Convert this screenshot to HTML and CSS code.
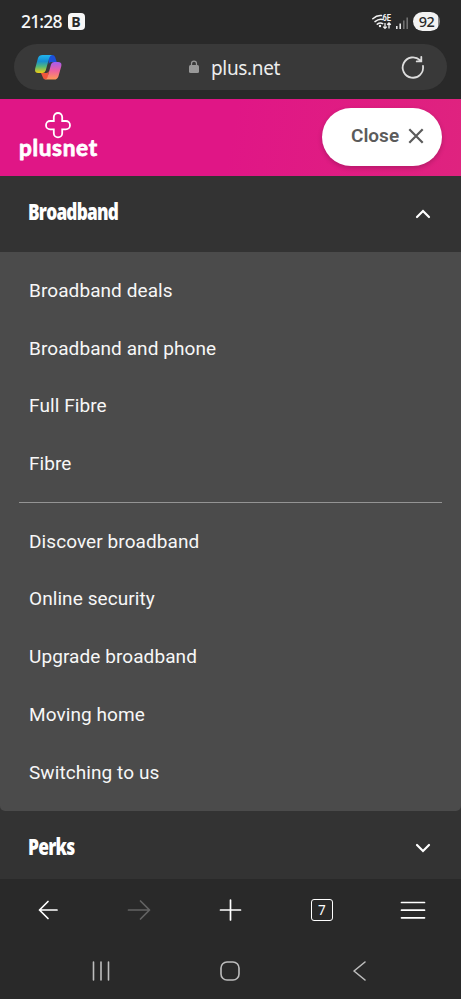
FILE: index.html
```
<!DOCTYPE html>
<html lang="en">
<head>
<meta charset="utf-8">
<title>Plusnet</title>
<link rel="stylesheet" href="styles.css">
</head>
<body>
<div class="status">
  <span class="time">21:28</span><span class="badge">B</span>
  <svg class="signals" width="40" height="20" viewBox="0 0 40 20" fill="none" stroke="#f2f2f2">
    <path d="M.8 6.800Q5 3 9.500 3.600M3 9.600Q6.500 6.600 10.500 7.400M5.300 12.200Q8 10 10.700 11.600" stroke-width="1.500" stroke-linecap="round"/>
    <circle cx="8" cy="14" r="1.200" fill="#f2f2f2" stroke="none"/>
    <text x="10.500" y="9.200" class="wifi-gen" textLength="8.500" lengthAdjust="spacingAndGlyphs">6E</text>
    <path d="M13 11v5.500M11.200 14.600L13 16.400L14.800 14.600M17 16.500v-5.500M15.200 12.800L17 11L18.800 12.800" stroke-width="1.300"/>
    <path d="M24.800 14V17M28.200 11.500V17" stroke-width="1.500"/>
    <path d="M31.800 8.500V17M35.200 5.500V17" stroke="#757575" stroke-width="1.500"/>
  </svg>
  <span class="battery">92</span>
</div>
<div class="address">
  <svg class="copilot" width="28" height="28" viewBox="0 0 28 28">
    <defs>
      <linearGradient id="ga" x1="0" y1="0" x2="0" y2="1"><stop offset="0" stop-color="#22b5ee"/><stop offset=".35" stop-color="#168ed0"/><stop offset=".65" stop-color="#55b978"/><stop offset="1" stop-color="#f1ce13"/></linearGradient>
      <linearGradient id="gb" x1="0" y1="0" x2="0" y2="1"><stop offset="0" stop-color="#a45cf0"/><stop offset=".5" stop-color="#ed609e"/><stop offset="1" stop-color="#ff9956"/></linearGradient>
    </defs>
    <path d="M14 2h4.300q2.200 0 2.900 2.200l1.500 4.900h-5.200q-2.100 0-2.700 2z" fill="#1c50d8"/>
    <path d="M7 20h5.200q2 0 2.700-2l-1 6.500q-.6 2-2.600 2-1.800 0-2.400-2z" fill="#ee563c"/>
    <path d="M8.500 2H18q-2 .4-2.800 3l-3.500 12.500q-1 2.500-3.300 2.500H4.400Q.2 20 1.200 15.500L4 5Q5 2 8.500 2z" fill="url(#ga)"/>
    <path d="M20 9h4q4.300 0 3.200 4.400l-2.800 10q-1 3.100-4.300 3.100h-9.700q2.500 0 3.200-2.500l3.400-12.500Q17.500 9 20 9z" fill="url(#gb)"/>
  </svg>
  <svg class="lock" width="12" height="14" viewBox="0 0 12 14"><rect x="1" y="5" width="10" height="8" rx="1.500" fill="#999"/><path d="M3.500 5V3.700a2.500 2.500 0 0 1 5 0V5" fill="none" stroke="#999" stroke-width="1.200"/></svg>
  <span class="host">plus.net</span>
  <svg class="reload" width="26" height="26" viewBox="0 0 26 26" fill="none" stroke="#ddd" stroke-width="1.800" stroke-linecap="round"><path d="M23 12A10.200 10.200 0 1 1 20 6.200M21.300 2.800V7.400H16.700"/></svg>
</div>
<header class="site">
  <svg class="logo" width="90" height="60" viewBox="0 0 90 60">
    <path d="M39 5a4.200 4.200 0 0 1 4.200 4.200v3.800h3.600a4.200 4.200 0 0 1 0 8.400h-3.600v3.800a4.200 4.200 0 0 1-8.400 0v-3.800h-3.600a4.200 4.200 0 0 1 0-8.400h3.600V9.200a4.200 4.200 0 0 1 4.200-4.200z" fill="none" stroke="#fff" stroke-width="1.800"/>
    <text x="0" y="47.500" class="wordmark" textLength="78">plusnet</text>
  </svg>
  <button class="close">Close <svg width="16" height="16" viewBox="0 0 16 16"><path d="M1.300 1.300l13.400 13.400M14.700 1.300l-13.400 13.400" fill="none" stroke="#5b5b5b" stroke-width="2.200"/></svg></button>
</header>
<nav>
  <div class="section first"><h2 class="title broadband">Broadband</h2><svg class="chev" width="16" height="10" viewBox="0 0 16 10"><path d="M2 8L8 2L14 8" fill="none" stroke="#fff" stroke-width="2.200" stroke-linecap="round"/></svg></div>
  <div class="submenu">
    <ul><li>Broadband deals</li><li>Broadband and phone</li><li>Full Fibre</li><li>Fibre</li></ul>
    <hr>
    <ul><li>Discover broadband</li><li>Online security</li><li>Upgrade broadband</li><li>Moving home</li><li>Switching to us</li></ul>
  </div>
  <div class="section second"><h2 class="title perks">Perks</h2><svg class="chev" width="16" height="10" viewBox="0 0 16 10"><path d="M2 2L8 8L14 2" fill="none" stroke="#fff" stroke-width="2.200" stroke-linecap="round"/></svg></div>
</nav>
<footer>
  <div class="toolbar">
    <svg width="26" height="26" viewBox="0 0 26 26"><path d="M13 4.500L4.500 13L13 21.500M4.500 13H22" /></svg>
    <svg class="dim" width="26" height="26" viewBox="0 0 26 26"><path d="M14.500 4L23.500 13L14.500 22M23.500 13H2.500" /></svg>
    <svg width="26" height="26" viewBox="0 0 26 26"><path d="M12.500 3V23M2.500 13H22.500" /></svg>
    <span class="tabs">7</span>
    <svg width="26" height="26" viewBox="0 0 26 26"><path d="M1.500 5.500h23M1.500 13.200h23M1.500 20.800h23" /></svg>
  </div>
  <div class="system">
    <svg width="24" height="24" viewBox="0 0 24 24"><path d="M4.500 3v18M12 3v18M19.500 3v18"/></svg>
    <svg width="24" height="24" viewBox="0 0 24 24"><rect x="3" y="3" width="18" height="18" rx="6"/></svg>
    <svg width="24" height="24" viewBox="0 0 24 24"><path d="M18 3L7 12L18 21"/></svg>
  </div>
</footer>
</body>
</html>
```
FILE: styles.css
```
* { box-sizing: border-box; }
body { margin: 0; width: 461px; height: 999px; background: #292929; color: #fff; font-family: Roboto, sans-serif; overflow: hidden; }
svg { display: block; flex: none; }
.status { height: 44px; display: flex; align-items: center; padding: 0 21px; }
.time { font: 500 17.500px/20px "Noto Sans", sans-serif; color: #f7f7f7; letter-spacing: -.85px; margin-top: -2px; }
.badge { margin: -1px 0 0 6px; width: 17px; height: 17px; border-radius: 4px; background: #f7f7f7; color: #292929; font: 700 14px/17px "Open Sans", sans-serif; text-align: center; }
.signals { margin-left: auto; }
.wifi-gen { font: 700 8.500px Roboto, sans-serif; fill: #f2f2f2; stroke: none; }
.battery { width: 27px; height: 19px; margin-left: 1px; margin-top: -1px; border-radius: 9.500px; background: linear-gradient(90deg, #f2f2f2 92%, #858585 92%); color: #292929; font: 500 14.500px/19px "Noto Sans", sans-serif; letter-spacing: -.6px; text-align: center; }
.address { height: 46px; margin: 0 14px; padding: 0 21px 0 20px; border-radius: 23px; background: #393939; display: flex; align-items: center; }
.lock { margin-left: 126px; }
.host { margin: 2px 0 0 11px; font: 400 19px/24px "Noto Sans", sans-serif; letter-spacing: -.35px; color: #ededed; }
.reload { margin-left: auto; }
.site { height: 77px; margin-top: 9px; padding: 0 19px; background: linear-gradient(100deg, #e01686 50%, #df237f); display: flex; justify-content: space-between; }
.logo { margin-top: 9px; }
.wordmark { font: 700 22.500px Lato, sans-serif; fill: #fff; stroke: #fff; stroke-width: .8px; stroke-linejoin: round; }
.close { width: 120px; height: 58px; margin-top: 9px; padding: 0 18px 3px 29px; border: 0; border-radius: 29px; background: #fff; color: #5b5b5b; font: 600 19px Roboto, sans-serif; display: flex; align-items: center; justify-content: space-between; box-shadow: 0 2px 5px #0003; }
.section { display: flex; align-items: center; justify-content: space-between; padding: 0 30px 0 28px; background: #333; }
.first { height: 76px; padding-bottom: 4px; }
.first .chev { margin-top: 4px; }
.second { height: 68px; padding-top: 3px; }
.second .chev { margin-top: 3px; }
.title { margin: -2px 0 0; font: 800 22px/28px "Open Sans", sans-serif; letter-spacing: -1px; transform-origin: left center; }
.broadband { transform: scaleX(.785); }
.perks { transform: scaleX(.79); }
nav { background: #333; }
.submenu { height: 559px; padding: 10px 19px 0; background: #4b4b4b; border-radius: 0 0 5px 5px; }
ul { list-style: none; margin: 0; padding: 0 10px; }
li { height: 57.700px; line-height: 57.700px; font-size: 19px; letter-spacing: .08px; color: #f7f7f7; }
hr { border: 0; height: 1px; background: #949494; margin: 9px 0 10px; }
.toolbar { height: 62px; padding: 0 35px; display: flex; align-items: center; justify-content: space-between; }
.toolbar svg { fill: none; stroke: #fff; stroke-width: 1.700; stroke-linecap: round; stroke-linejoin: round; }
.toolbar .dim { stroke: #636363; }
.tabs { width: 22px; height: 22px; margin: 0 2px; border: 1.500px solid #fff; border-radius: 3px; font: 400 13.500px/20px "Noto Sans", sans-serif; text-align: center; }
.system { height: 58px; padding: 2px 90px 0 88.500px; display: flex; justify-content: space-between; align-items: flex-start; }
.system svg { margin-top: 16px; fill: none; stroke: #bdbdbd; stroke-width: 1.600; stroke-linecap: round; stroke-linejoin: round; }
```
